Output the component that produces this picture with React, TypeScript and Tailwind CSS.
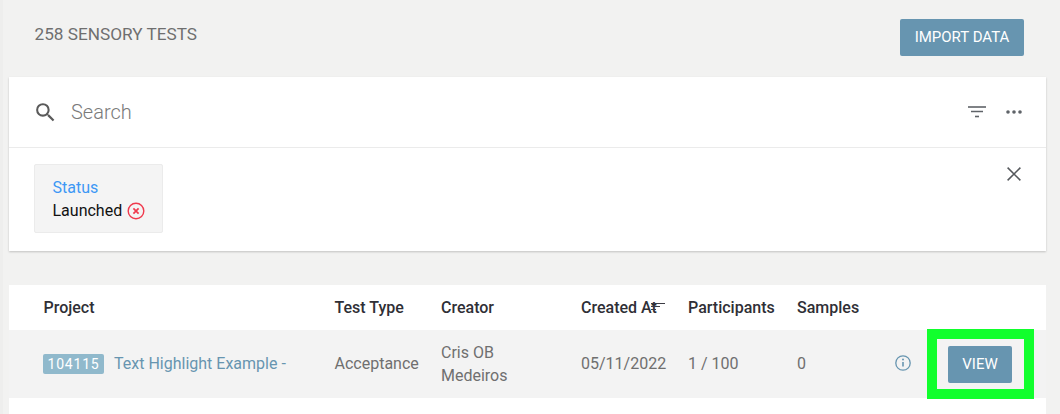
const font = "font-['Roboto',sans-serif]";

function SearchIcon() {
  return (
    <svg width="25" height="25" viewBox="0 0 24 24" fill="#5a5a5a">
      <path d="M15.5 14h-.79l-.28-.27A6.471 6.471 0 0 0 16 9.5 6.5 6.5 0 1 0 9.5 16c1.61 0 3.09-.59 4.23-1.57l.27.28v.79l5 4.99L20.49 19l-4.99-5zm-6 0C7.01 14 5 11.99 5 9.5S7.01 5 9.5 5 14 7.01 14 9.5 11.99 14 9.5 14z" />
    </svg>
  );
}

function CloseIcon() {
  return (
    <svg width="14" height="14" viewBox="0 0 14 14" fill="none" stroke="#55585c" strokeWidth="1.5">
      <path d="M.6.6l12.8 12.8M13.4.6L.6 13.4" />
    </svg>
  );
}

function FilterIcon() {
  return (
    <svg width="18" height="12" viewBox="0 0 18 12" fill="none" stroke="#5f6368">
      <path d="M0 1h18" strokeWidth="1.6" />
      <path d="M3 5.5h12" strokeWidth="1.5" />
      <path d="M7 10.5h4" strokeWidth="1.6" />
    </svg>
  );
}

function SortIcon() {
  return (
    <svg width="15" height="8" viewBox="0 0 15 8" fill="none" stroke="#3c3c44" strokeWidth="1">
      <path d="M0 .5h14" />
      <path d="M0 3.5h9" />
      <path d="M0 6.5h5" />
    </svg>
  );
}

function MoreIcon() {
  return (
    <svg width="16" height="4" viewBox="0 0 16 4" fill="#5f6368">
      <circle cx="2" cy="2" r="1.8" />
      <circle cx="8" cy="2" r="1.8" />
      <circle cx="14" cy="2" r="1.8" />
    </svg>
  );
}

function RemoveIcon() {
  return (
    <svg width="18" height="18" viewBox="0 0 18 18" fill="none" stroke="#f0394d">
      <circle cx="9" cy="9" r="7.8" strokeWidth="1.4" />
      <path d="M6.4 6.4l5.2 5.2M11.6 6.4l-5.2 5.2" strokeWidth="1.7" />
    </svg>
  );
}

function InfoIcon() {
  return (
    <svg width="16" height="16" viewBox="0 0 16 16" fill="none" stroke="#6795b0">
      <circle cx="8" cy="8" r="7.2" strokeWidth="1.3" />
      <path d="M8 7v4.6" strokeWidth="1.6" />
      <circle cx="8" cy="4.6" r="1" fill="#6795b0" stroke="none" />
    </svg>
  );
}

export default function App() {
  return (
    <div className={`${font} h-[414px] w-[1060px] overflow-hidden border-l-[3px] border-[#eeeeed] bg-[#f2f2f1] pl-[6px] pr-[14px]`}>
      <div className="flex h-[77px] items-start justify-between pl-[25.5px] pr-[22px]">
        <span className="mt-[24px] text-[17.2px] leading-[20px] text-[#6f6f6f]">258 SENSORY TESTS</span>
        <button className="mt-[19px] h-[37px] w-[124px] rounded-[2px] bg-[#6795b0] text-center text-[15px] text-white">
          IMPORT DATA
        </button>
      </div>

      <div className="bg-white shadow-[0_1px_2px_rgba(0,0,0,0.2)]">
        <div className="flex h-[71px] items-center border-b border-[#ebebeb] pl-[24px] pr-[24px]">
          <SearchIcon />
          <span className="ml-[13px] flex-1 text-[20px] font-light text-[#7a7a7a]">Search</span>
          <FilterIcon />
          <span className="ml-[20px]">
            <MoreIcon />
          </span>
        </div>
        <div className="flex h-[103px] items-start justify-between pl-[25px] pr-[25px] pt-[16px]">
          <div className="h-[69px] w-[129px] rounded-[2px] border border-[#ebebeb] bg-[#f4f4f4] pl-[17.5px] pt-[12px] text-[16px] leading-[22px]">
            <div className="text-[#3d98f5]">Status</div>
            <div className="mt-[1px] flex items-center gap-[5px] text-[#111]">
              Launched
              <RemoveIcon />
            </div>
          </div>
          <span className="mt-[3px]">
            <CloseIcon />
          </span>
        </div>
      </div>

      <div className="relative mt-[34px] h-[129px] bg-white">
        <div className="flex h-[45px] items-center pl-[34.5px] text-[16px] font-medium text-[#2f2f36]">
          <span className="w-[291px]">Project</span>
          <span className="w-[106.5px]">Test Type</span>
          <span className="w-[140px]">Creator</span>
          <span className="relative w-[107px]">
            Created At
            <span className="absolute left-[70px] top-[7px] flex">
              <SortIcon />
            </span>
          </span>
          <span className="w-[109px]">Participants</span>
          <span>Samples</span>
        </div>
        <div className="flex h-[68px] items-center bg-[#f3f3f3] pl-[34px] text-[16px] text-[#6f6f6f]">
          <div className="flex w-[291.5px] items-center">
            <span className="flex h-[20px] w-[61px] items-center justify-center rounded-[2px] bg-[#90b9cc] text-[14px] tracking-[0.8px] text-white">
              104115
            </span>
            <span className="ml-[10px] text-[#6795b0]">Text Highlight Example -</span>
          </div>
          <span className="w-[106.5px]">Acceptance</span>
          <span className="w-[140px] leading-[23px]">
            Cris OB
            <br />
            Medeiros
          </span>
          <span className="w-[107px]">05/11/2022</span>
          <span className="w-[109px]">1 / 100</span>
          <span className="w-[98px]">0</span>
          <span className="-mt-[3px]">
            <InfoIcon />
          </span>
          <button className="ml-[37px] h-[37px] w-[64px] rounded-[2px] bg-[#6795b0] text-[15px] text-white">
            VIEW
          </button>
        </div>
        <div className="absolute left-[918px] top-[44px] h-[70px] w-[107px] border-[10px] border-[#11ff2d]" />
      </div>
    </div>
  );
}
